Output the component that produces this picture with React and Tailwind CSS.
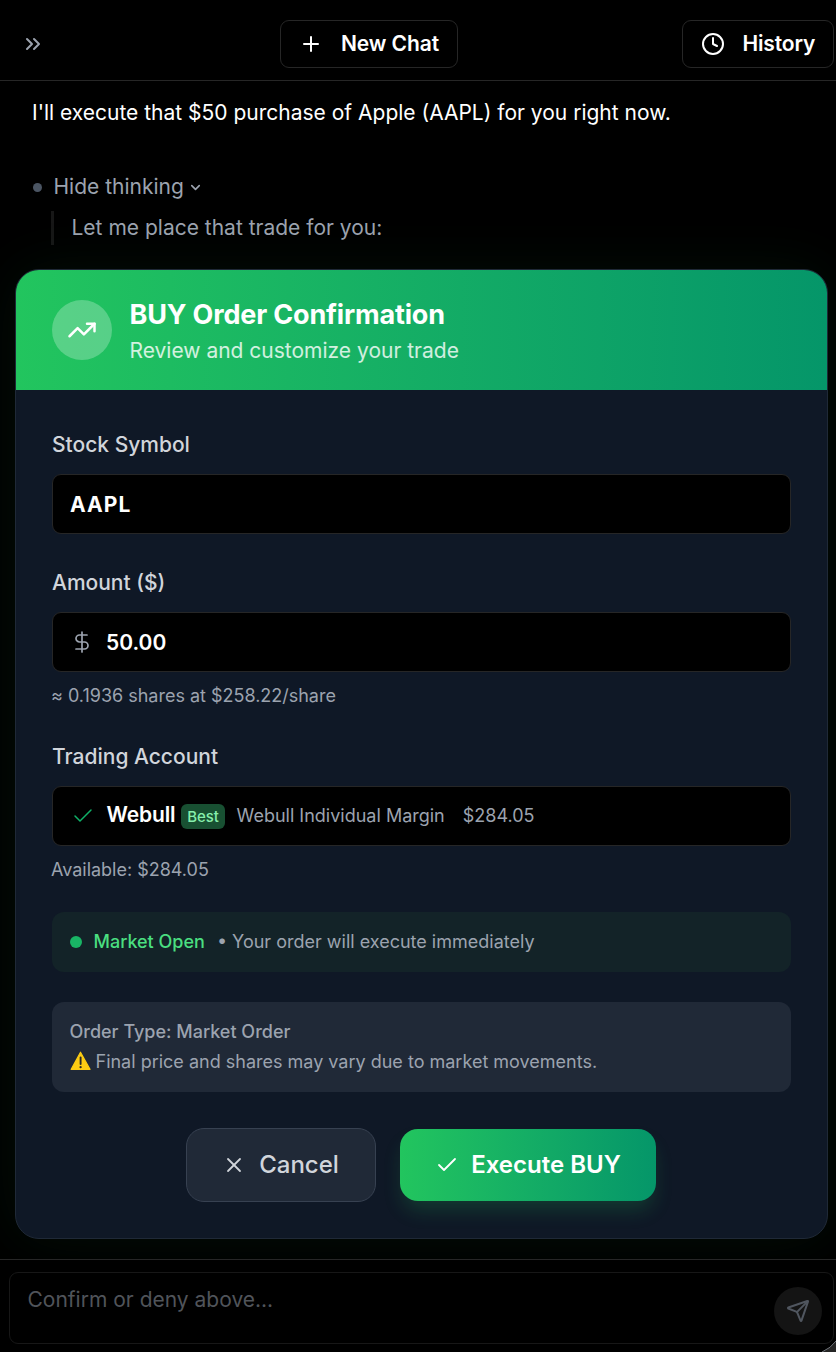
import React, { useState } from 'react';
import {
  ChevronsRight, Plus, Clock, ChevronDown, TrendingUp,
  DollarSign, Check, X, Send
} from 'lucide-react';

const order = {
  symbol: 'AAPL',
  amount: '50.00',
  estimate: '≈ 0.1936 shares at $258.22/share',
  broker: 'Webull',
  account: 'Webull Individual Margin',
  balance: '$284.05',
};

const WarningIcon = () => (
  <svg viewBox="0 0 22 20" className="w-[22px] h-5 shrink-0 -mt-0.5">
    <path d="M10.5 1.2 20 18.4H1.2Z" fill="#fccc13" stroke="#fccc13" strokeWidth="1.2" strokeLinejoin="round" />
    <path d="M10.6 6.5v6.6" stroke="#28282b" strokeWidth="1.9" strokeLinecap="round" />
    <circle cx="10.6" cy="16.2" r="1.15" fill="#28282b" />
  </svg>
);

const Field = ({ label, hint, children }) => (
  <div>
    <div className="pt-px h-9 text-[21px] leading-9 font-medium text-[#d1d5db]">{label}</div>
    <div className="mt-3 h-[60px] flex items-center rounded-[9px] border border-[#262626] bg-black px-[17px]">
      {children}
    </div>
    {hint && <div className="-ml-px mt-[9px] h-[27px] pt-px text-[18px] leading-[27px] tracking-[-0.01px] text-[#9ca3af]">{hint}</div>}
  </div>
);

const Header = () => (
  <header className="h-[81px] shrink-0 flex items-center justify-between border-b border-[#262626] pl-[21px] pr-[2px] pt-[7px]">
    <button className="w-[152px] text-[#9ca3af]">
      <ChevronsRight className="w-6 h-6" strokeWidth={2} />
    </button>
    <button className="h-12 w-[178px] mr-[117px] flex items-center rounded-[9px] border border-[#262626] pl-[18px] text-[21px] font-semibold tracking-[-0.1px] text-white">
      <Plus className="w-6 h-6 mr-[18px]" strokeWidth={2} />
      New Chat
    </button>
    <button className="h-12 w-[152px] flex items-center rounded-[9px] border border-[#262626] pl-[18px] text-[21px] font-semibold tracking-[-0.15px] text-white">
      <Clock className="w-6 h-6 mr-[17.5px]" strokeWidth={2} />
      History
    </button>
  </header>
);

const OrderCard = () => (
  <div className="relative ml-[15px] w-[813px] h-[970px] shrink-0 overflow-hidden rounded-3xl border border-[#1f2937] bg-[#0f1826] shadow-[0_0_60px_rgba(34,197,94,0.08)]">
    {/* Title */}
    <div className="h-[120px] flex items-center gap-[17.5px] bg-gradient-to-r from-[#22c55e] to-[#059669] px-[36px]">
      <div className="w-[60px] h-[60px] rounded-full bg-white/25 flex items-center justify-center">
        <TrendingUp className="w-[30px] h-[30px] text-white" strokeWidth={2} />
      </div>
      <div className="pt-[5px]">
        <h2 className="text-[27px] leading-9 font-bold tracking-[-0.17px] text-white">BUY Order Confirmation</h2>
        <p className="text-[21px] leading-9 text-white/80">Review and customize your trade</p>
      </div>
    </div>

    {/* Form */}
    <div className="p-[36px] space-y-[30px]">
      <Field label="Stock Symbol">
        <span className="pt-0.5 text-[21px] font-bold tracking-[1.1px] text-white">{order.symbol}</span>
      </Field>
      <Field label="Amount ($)" hint={order.estimate}>
        <DollarSign className="w-6 h-6 mr-3 text-[#9ca3af]" strokeWidth={1.7} />
        <span className="pt-px text-[21px] font-semibold text-white">{order.amount}</span>
      </Field>
      <Field label="Trading Account" hint={`Available: ${order.balance}`}>
        <Check className="w-6 h-6 ml-px mr-[11.5px] text-[#10b068]" strokeWidth={1.5} />
        <span className="-mt-0.5 text-[21px] font-semibold tracking-[-0.15px] text-white">{order.broker}</span>
        <span className="ml-[6px] h-[25px] rounded-md bg-[#185032] px-[6px] text-[15px] leading-[25px] font-medium tracking-[-0.15px] text-[#86efac]">Best</span>
        <span className="ml-3 -mt-px text-[18px] text-[#9ca3af]">{order.account}</span>
        <span className="ml-[18px] -mt-px text-[18px] text-[#9ca3af]">{order.balance}</span>
      </Field>

      <div className="h-[60px] flex items-center rounded-xl bg-[#132328] px-[18px] text-[18px]">
        <span className="w-3 h-3 rounded-full bg-[#19b565]" />
        <span className="ml-[11.5px] -mt-px font-medium text-[#4ade80]">Market Open</span>
        <span className="ml-3 -mt-px text-[#9ca3af]">• Your order will execute immediately</span>
      </div>

      <div className="h-[90px] rounded-xl bg-[#202937] px-[17.5px] py-[15px] text-[18px] leading-[30px] text-[#9ca3af]">
        <div className="font-medium">Order Type: Market Order</div>
        <div className="flex items-center gap-1">
          <WarningIcon />
          Final price and shares may vary due to market movements.
        </div>
      </div>

      <div className="pt-[6px] pr-[2px] flex items-center justify-center gap-6">
        <button className="w-[190px] h-[74px] flex items-center justify-center gap-[13px] rounded-[18px] border border-[#374151] bg-[#202937] text-[24px] font-medium text-[#d1d5db]">
          <X className="w-6 h-6" strokeWidth={1.8} />
          Cancel
        </button>
        <button className="w-[256px] h-[72px] flex items-center justify-center gap-3 rounded-[18px] bg-gradient-to-r from-[#22c55e] to-[#059669] pl-px text-[24px] font-semibold text-white shadow-[0_12px_20px_-3px_rgba(34,197,94,0.2)]">
          <Check className="w-6 h-6" strokeWidth={1.8} />
          Execute BUY
        </button>
      </div>
    </div>
  </div>
);

const App = () => {
  const [showThinking, setShowThinking] = useState(true);
  const [message, setMessage] = useState('');

  return (
    <div className="relative w-[836px] h-[1352px] overflow-hidden flex flex-col bg-black font-['Inter',sans-serif]">
      <Header />

      <main className="h-[1178px] shrink-0 flex flex-col overflow-hidden">
        <p className="mt-[14px] ml-8 text-[21px] leading-9 text-white">
          I'll execute that $50 purchase of Apple (AAPL) for you right now.
        </p>

        {/* Thinking */}
        <button
          onClick={() => setShowThinking(!showThinking)}
          className="mt-[38px] ml-[33px] flex items-center text-[21px] leading-9 text-[#9ca3af]"
        >
          <span className="mr-[11.5px] w-[9px] h-[9px] rounded-full bg-[#4b5563]" />
          Hide thinking
          <ChevronDown className="ml-1 w-[15px] h-[15px]" strokeWidth={2.6} />
        </button>
        <div className="mt-[6px] mb-6 ml-[51px] h-[34px] border-l-[3px] border-[#171717] pl-[17.5px] text-[21px] leading-[34px] text-[#9ca3af]">
          {showThinking && 'Let me place that trade for you:'}
        </div>

        <OrderCard />
      </main>

      {/* Composer */}
      <footer className="h-[93px] shrink-0 border-t border-[#262626] bg-black pl-[9px] pr-[2px] pt-3">
        <div className="h-[72px] flex rounded-[9px] border border-[#171717] pl-[17.5px] pr-[11px]">
          <input
            value={message}
            onChange={(e) => setMessage(e.target.value)}
            placeholder="Confirm or deny above..."
            className="h-[52px] flex-1 bg-transparent text-[21px] text-white outline-none placeholder:text-[#50545a]"
          />
          <button className="mt-[14px] w-12 h-12 flex items-center justify-center rounded-full bg-[#141414] text-[#50565f]">
            <Send className="w-6 h-6" strokeWidth={2} />
          </button>
        </div>
      </footer>

      {/* Window corner */}
      <svg viewBox="0 0 18 12" className="absolute right-0 bottom-0 w-[18px] h-3">
        <path d="M18 1Q13 8 4 12H18Z" fill="#252525" />
        <path d="M18 1Q13 8 4 12" fill="none" stroke="#70747a" strokeWidth="1" />
      </svg>
    </div>
  );
};

export default App;
